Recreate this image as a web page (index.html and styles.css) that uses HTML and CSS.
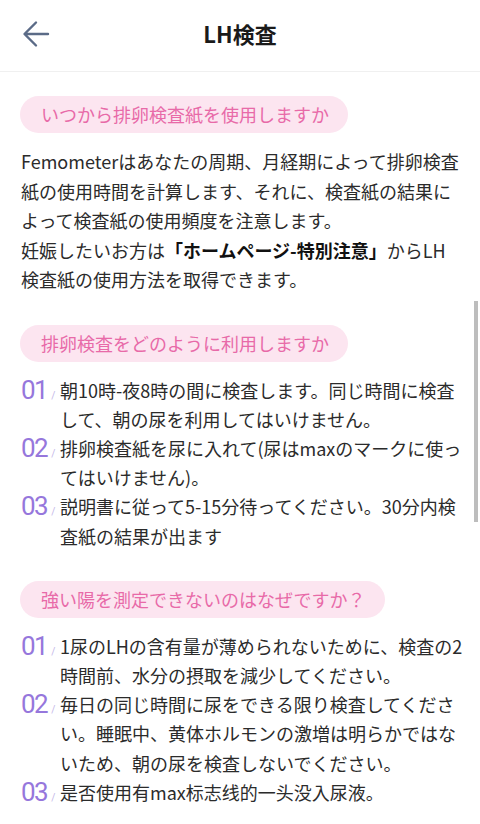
FILE: index.html
```html
<!DOCTYPE html>
<html lang="ja">
<head>
    <meta charset="UTF-8">
    <meta name="viewport" content="width=device-width, initial-scale=1.0">
    <title>LH検査</title>
    <link rel="stylesheet" href="styles.css">
</head>
<body>
    <header class="topbar">
        <a class="back" href="#" aria-label="戻る">
            <svg width="28" height="28" viewBox="0 0 28 28" fill="none">
                <path d="M26 14H3M14 2.5L2.5 14L14 25.5" stroke="#5b6b87" stroke-width="2.4" stroke-linecap="round" stroke-linejoin="round"/>
            </svg>
        </a>
        <h1 class="title">LH検査</h1>
    </header>

    <main class="content">
        <section class="block">
            <h2 class="pill">いつから排卵検査紙を使用しますか</h2>
            <p class="text">
                Femometerはあなたの周期、月経期によって排卵検査紙の使用時間を計算します、それに、検査紙の結果によって検査紙の使用頻度を注意します。<br>
                妊娠したいお方は<b>「ホームページ-特別注意」</b>からLH検査紙の使用方法を取得できます。
            </p>
        </section>

        <section class="block">
            <h2 class="pill">排卵検査をどのように利用しますか</h2>
            <ol class="steps">
                <li><span class="num">01<i>/</i></span><span class="step-text">朝10時-夜8時の間に検査します。同じ時間に検査して、朝の尿を利用してはいけません。</span></li>
                <li><span class="num">02<i>/</i></span><span class="step-text">排卵検査紙を尿に入れて(尿はmaxのマークに使ってはいけません)。</span></li>
                <li><span class="num">03<i>/</i></span><span class="step-text">説明書に従って5-15分待ってください。30分内検査紙の結果が出ます</span></li>
            </ol>
        </section>

        <section class="block">
            <h2 class="pill">強い陽を測定できないのはなぜですか？</h2>
            <ol class="steps">
                <li><span class="num">01<i>/</i></span><span class="step-text">1尿のLHの含有量が薄められないために、検査の2時間前、水分の摂取を減少してください。</span></li>
                <li><span class="num">02<i>/</i></span><span class="step-text">毎日の同じ時間に尿をできる限り検査してください。睡眠中、黄体ホルモンの激増は明らかではないため、朝の尿を検査しないでください。</span></li>
                <li><span class="num">03<i>/</i></span><span class="step-text">是否使用有max标志线的一头没入尿液。</span></li>
            </ol>
        </section>
    </main>

    <div class="scrollbar"></div>
</body>
</html>
```

FILE: styles.css
```css
:root {
    --pink: #e86aa8;
    --pink-bg: #fce5f0;
    --purple: #9677dc;
    --text-color: #2b2b2b;
}

* {
    margin: 0;
    padding: 0;
    box-sizing: border-box;
}

body {
    font-family: "Noto Sans CJK JP", "Noto Sans", sans-serif;
    background: #fff;
    color: var(--text-color);
    width: 480px;
    overflow: hidden;
}

.topbar {
    height: 72px;
    border-bottom: 1px solid #f0f0f0;
    display: flex;
    align-items: center;
    justify-content: center;
    position: relative;
}

.back {
    position: absolute;
    left: 22px;
    top: 20px;
    display: flex;
}

.title {
    font-size: 22px;
    font-weight: 700;
    color: #1a1a1a;
    margin-top: -6px;
}

.content {
    padding: 24px 10px 0 21px;
}

.block {
    margin-bottom: 30px;
}

.pill {
    display: inline-block;
    height: 37px;
    line-height: 37px;
    padding: 0 19px 0 21px;
    margin-left: -1px;
    border-radius: 19px;
    background: var(--pink-bg);
    color: var(--pink);
    font-size: 18px;
    font-weight: 400;
    margin-bottom: 14px;
}

.text {
    font-size: 18px;
    line-height: 29.5px;
    padding-right: 8px;
}

.text b {
    font-weight: 700;
    color: #111;
}

.steps {
    list-style: none;
}

.steps li {
    display: flex;
    font-size: 18px;
    line-height: 29.2px;
}

.num {
    flex: none;
    width: 39px;
    font-family: Roboto, sans-serif;
    font-weight: 400;
    font-size: 26px;
    letter-spacing: -1.5px;
    color: var(--purple);
    line-height: 29px;
}

.num i {
    font-style: normal;
    font-size: 10px;
    letter-spacing: 0;
    color: #c4b6e8;
    margin-left: 4px;
}

.step-text {
    flex: 1;
}

.scrollbar {
    position: absolute;
    right: 2px;
    top: 301px;
    width: 4px;
    height: 221px;
    background: #bdbdbd;
}
```
